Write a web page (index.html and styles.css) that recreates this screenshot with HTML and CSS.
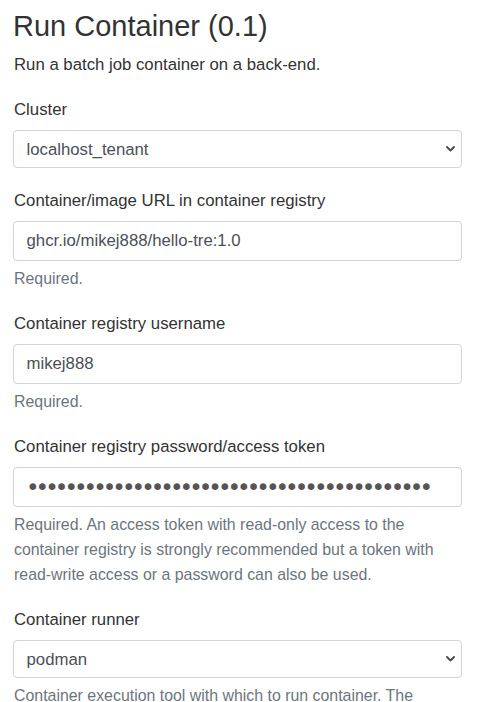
FILE: index.html
```html
<!DOCTYPE html>
<html lang="en">
<head>
<meta charset="utf-8">
<title>Run Container (0.1)</title>
<link rel="stylesheet" href="styles.css">
</head>
<body>
<main class="page">
  <h1 class="title">Run Container (0.1)</h1>
  <p class="desc">Run a batch job container on a back-end.</p>

  <div class="group">
    <label class="label" for="cluster">Cluster</label>
    <div class="select-wrap">
      <select class="control select" id="cluster">
        <option>localhost_tenant</option>
      </select>
      <svg class="chevron" width="9" height="6" viewBox="0 0 9 6" aria-hidden="true"><polyline points="1,1 4.5,4.5 8,1" fill="none" stroke="#4a4a4a" stroke-width="1.8" stroke-linecap="round" stroke-linejoin="round"/></svg>
    </div>
  </div>

  <div class="group">
    <label class="label" for="image">Container/image URL in container registry</label>
    <input class="control" id="image" type="text" value="ghcr.io/mikej888/hello-tre:1.0">
    <div class="help">Required.</div>
  </div>

  <div class="group">
    <label class="label" for="user">Container registry username</label>
    <input class="control" id="user" type="text" value="mikej888">
    <div class="help">Required.</div>
  </div>

  <div class="group">
    <label class="label" for="pass">Container registry password/access token</label>
    <input class="control password" id="pass" type="password" value="ghp_abcdefghijklmnopqrstuvwxyz0123456789AB">
    <div class="help">Required. An access token with read-only access to the container registry is strongly recommended but a token with read-write access or a password can also be used.</div>
  </div>

  <div class="group">
    <label class="label" for="runner">Container runner</label>
    <div class="select-wrap">
      <select class="control select" id="runner">
        <option>podman</option>
      </select>
      <svg class="chevron" width="9" height="6" viewBox="0 0 9 6" aria-hidden="true"><polyline points="1,1 4.5,4.5 8,1" fill="none" stroke="#4a4a4a" stroke-width="1.8" stroke-linecap="round" stroke-linejoin="round"/></svg>
    </div>
    <div class="help">Container execution tool with which to run container. The</div>
  </div>
</main>
</body>
</html>
```

FILE: styles.css
```css
html, body {
  margin: 0;
  padding: 0;
  background: #ffffff;
}

body {
  font-family: "Liberation Sans", Arial, sans-serif;
  font-size: 16.75px;
  line-height: 25px;
  color: #333333;
}

.page {
  width: 449px;
  padding: 9px 0 0 13px;
}

.title {
  margin: 0 0 8px;
  font-size: 29px;
  font-weight: 400;
  line-height: 35px;
  color: #333333;
}

.desc {
  margin: 0 0 20px 1px;
}

.group {
  margin-bottom: 20px;
}

.label {
  display: block;
  margin: 0 0 8px 1px;
}

.control {
  display: block;
  box-sizing: border-box;
  width: 100%;
  height: 40px;
  margin: 0;
  padding: 6px 12.5px;
  border: 1px solid #ced4da;
  border-radius: 4px;
  background: #ffffff;
  font-family: "Liberation Sans", Arial, sans-serif;
  font-size: 16.75px;
  color: #495057;
  outline: none;
}

.select-wrap {
  position: relative;
}

.select {
  height: 38px;
  appearance: none;
  -webkit-appearance: none;
  padding-right: 28px;
}

.chevron {
  position: absolute;
  right: 7px;
  top: 16px;
  pointer-events: none;
}

.password {
  padding: 0 12px;
  font-family: "DejaVu Sans", sans-serif;
  font-size: 23px;
  letter-spacing: -3.97px;
  color: #555555;
}

.help {
  margin: 5px 0 0 1px;
  font-size: 15.9px;
  line-height: 25px;
  color: #6c757d;
}
```
